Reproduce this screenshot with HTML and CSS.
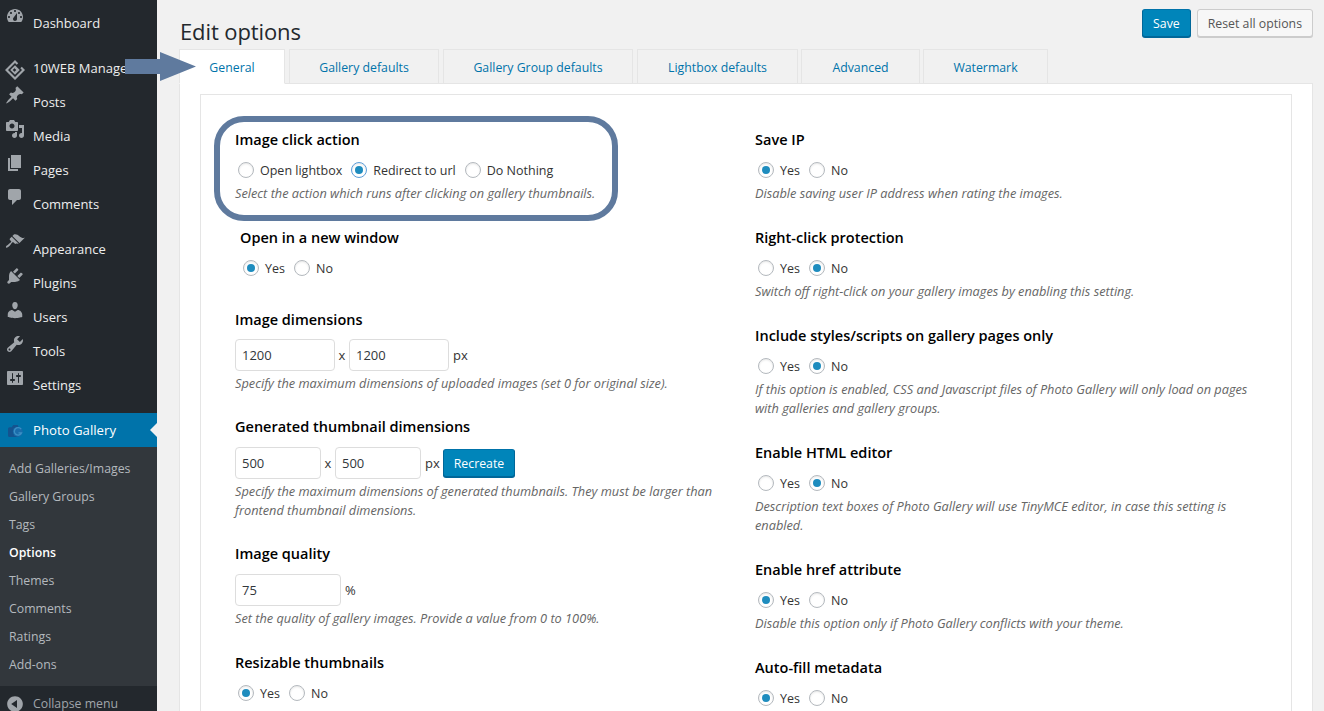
FILE: index.html
```html
<!DOCTYPE html>
<html lang="en">
<head>
<meta charset="utf-8">
<title>Edit options</title>
<link rel="stylesheet" href="styles.css">
</head>
<body>
<div class="shell">
  <nav class="sidebar">
    <ul class="menu">
      <li class="item"><svg class="ico" viewBox="0 0 20 20"><path d="M3.76 16h12.48c1.1-1.37 1.76-3.11 1.76-5 0-4.42-3.58-8-8-8s-8 3.58-8 8c0 1.89.66 3.63 1.76 5zM10 4c.55 0 1 .45 1 1s-.45 1-1 1-1-.45-1-1 .45-1 1-1zM6 6c.55 0 1 .45 1 1s-.45 1-1 1-1-.45-1-1 .45-1 1-1zm8 0c.55 0 1 .45 1 1s-.45 1-1 1-1-.45-1-1 .45-1 1-1zm-5.37 5.55L12 7v6c0 1.1-.9 2-2 2s-2-.9-2-2c0-.57.24-1.08.63-1.45zM4 10c.55 0 1 .45 1 1s-.45 1-1 1-1-.45-1-1 .45-1 1-1zm12 0c.55 0 1 .45 1 1s-.45 1-1 1-1-.45-1-1 .45-1 1-1z"/></svg><span>Dashboard</span></li>
      <li class="item sep"><svg class="ico ico-ten" viewBox="0 0 20 20"><path fill-rule="evenodd" d="M10 0l3.200 3.200-1.500 1.500L10 3 3 10l7 7 7-7-1.700-1.700 1.500-1.500L20 10 10 20 0 10zM10 5.200L14.800 10 10 14.800 5.200 10zM9.500 8.200L7.700 10l1.800 1.800L11.300 10z"/></svg><span class="clip">10WEB Manager</span></li>
      <li class="item"><svg class="ico" viewBox="0 0 20 20"><path d="M10.44 3.02l1.82-1.82 6.36 6.35-1.83 1.82c-1.05-.68-2.48-.57-3.41.36l-.75.75c-.92.93-1.04 2.35-.35 3.41l-1.83 1.82-2.41-2.41-2.8 2.79c-.42.42-3.38 2.71-3.8 2.29s1.86-3.39 2.28-3.81l2.79-2.79L4.1 9.36l1.83-1.82c1.05.69 2.48.57 3.4-.36l.75-.75c.93-.92 1.05-2.35.36-3.41z"/></svg><span>Posts</span></li>
      <li class="item"><svg class="ico" viewBox="0 0 20 20"><path d="M13 11V4c0-.55-.45-1-1-1h-1.670L9 1H5L3.670 3H2c-.55 0-1 .45-1 1v7c0 .55.45 1 1 1h10c.55 0 1-.45 1-1zM7 4.500c1.380 0 2.500 1.120 2.500 2.500S8.380 9.500 7 9.500 4.500 8.380 4.500 7 5.620 4.500 7 4.500zM14 6h5v10.500c0 1.380-1.120 2.500-2.500 2.500S14 17.880 14 16.500s1.120-2.500 2.500-2.500c.17 0 .34.02.5.05V9h-3V6zm-4 8.050V13h2v3.500c0 1.380-1.120 2.500-2.500 2.500S7 17.880 7 16.500 8.120 14 9.500 14c.17 0 .34.02.5.05z"/></svg><span>Media</span></li>
      <li class="item"><svg class="ico" viewBox="0 0 20 20"><path d="M6 15V2h10v13H6zm-1 1h8v2H3V5h2v11z"/></svg><span>Pages</span></li>
      <li class="item"><svg class="ico" viewBox="0 0 20 20"><path d="M5 2h9c1.100 0 2 .9 2 2v7c0 1.100-.9 2-2 2h-2l-5 5v-5H5c-1.100 0-2-.9-2-2V4c0-1.100.9-2 2-2z"/></svg><span>Comments</span></li>
      <li class="item sep"><svg class="ico" viewBox="0 0 20 20"><path d="M14.480 11.060L7.410 3.990l1.500-1.500c.5-.56 2.300-.47 3.510.32 1.210.8 1.430 1.280 2.910 2.100 1.180.64 2.450 1.260 4.450.85zm-.71.71L6.700 4.700 4.930 6.470c-.39.39-.39 1.020 0 1.410l1.060 1.060c.39.39.39 1.030 0 1.420-.6.6-1.430 1.110-2.210 1.690-.35.26-.7.53-1.010.84C1.430 13.230.4 14.750 1.100 15.450c.71.7 2.220-.33 3.560-1.670.31-.31.58-.66.85-1.020.57-.78 1.080-1.610 1.690-2.210.39-.39 1.020-.39 1.410 0l1.060 1.060c.39.39 1.020.39 1.410 0z"/></svg><span>Appearance</span></li>
      <li class="item"><svg class="ico" viewBox="0 0 20 20"><path d="M13.110 4.360L9.870 7.600 8 5.730l3.240-3.240c.35-.34 1.050-.2 1.560.32.52.51.66 1.210.31 1.550zm-8 1.770l.91-1.120 9.010 9.010-1.190.84c-.71.71-2.630 1.160-3.820 1.160H6.140L4.900 17.260c-.59.59-1.540.59-2.120 0-.59-.58-.59-1.530 0-2.120l1.240-1.240v-3.880c0-1.130.4-3.190 1.090-3.890zm7.260 3.970l3.240-3.240c.34-.35 1.040-.21 1.550.31.52.51.66 1.210.31 1.550l-3.240 3.250z"/></svg><span>Plugins</span></li>
      <li class="item"><svg class="ico" viewBox="0 0 20 20"><path d="M10 9.250c-2.270 0-2.730-3.440-2.730-3.440C7 4.020 7.820 2 9.970 2c2.160 0 2.980 2.020 2.710 3.810 0 0-.41 3.440-2.680 3.440zm0 2.570L12.720 10c2.390 0 4.520 2.330 4.520 4.530v2.490s-3.650 1.130-7.240 1.130c-3.650 0-7.240-1.130-7.240-1.130v-2.490c0-2.250 1.940-4.480 4.470-4.480z"/></svg><span>Users</span></li>
      <li class="item"><svg class="ico" viewBox="0 0 20 20"><path d="M16.680 9.770c-1.340 1.340-3.300 1.670-4.950.99l-5.410 6.520c-.99.99-2.590.99-3.580 0s-.99-2.590 0-3.570l6.520-5.420c-.68-1.650-.35-3.610.99-4.950 1.280-1.280 3.120-1.620 4.720-1.060l-2.890 2.890 2.820 2.820 2.860-2.870c.53 1.580.18 3.390-1.080 4.670zM3.810 16.210c.4.39 1.040.39 1.430 0 .4-.4.4-1.040 0-1.430-.39-.4-1.030-.4-1.430 0-.39.39-.39 1.030 0 1.430z"/></svg><span>Tools</span></li>
      <li class="item"><svg class="ico" viewBox="0 0 20 20"><path d="M18 16V4c0-.55-.45-1-1-1H3c-.55 0-1 .45-1 1v12c0 .55.45 1 1 1h14c.55 0 1-.45 1-1zM8 11h1c.55 0 1 .45 1 1s-.45 1-1 1H8v1.500c0 .28-.22.5-.5.5s-.5-.22-.5-.5V13H6c-.55 0-1-.45-1-1s.45-1 1-1h1V5.500c0-.28.22-.5.5-.5s.5.22.5.5V11zm5-2h-1c-.55 0-1-.45-1-1s.45-1 1-1h1V5.500c0-.28.22-.5.5-.5s.5.22.5.5V7h1c.55 0 1 .45 1 1s-.45 1-1 1h-1v5.500c0 .28-.22.5-.5.5s-.5-.22-.5-.5V9z"/></svg><span>Settings</span></li>
      <li class="item sep current"><svg class="ico-pg" viewBox="0 0 20 16"><path d="M5 3l2-3h6l1 3zM2 3h12v13H2a2 2 0 0 1-2-2V5a2 2 0 0 1 2-2z" fill="#14538f"/><circle cx="13" cy="9" r="6.500" fill="#1a6cab"/><path d="M17.500 5.500A5 5 0 1 0 18 10.500H14" fill="none" stroke="#3b8fc4" stroke-width="1.800"/></svg><span>Photo Gallery</span></li>
    </ul>
    <ul class="submenu">
      <li>Add Galleries/Images</li>
      <li>Gallery Groups</li>
      <li>Tags</li>
      <li class="on">Options</li>
      <li>Themes</li>
      <li>Comments</li>
      <li>Ratings</li>
      <li>Add-ons</li>
    </ul>
    <div class="collapse"><svg class="ico-c" viewBox="0 0 20 20"><path d="M10 2.160c4.330 0 7.840 3.510 7.840 7.840s-3.510 7.840-7.840 7.840S2.160 14.330 2.160 10 5.710 2.160 10 2.160zm2 11.720V6.120L6.180 9.970z"/></svg><span>Collapse menu</span></div>
  </nav>
  <main class="content">
    <header class="topbar">
      <h1>Edit options</h1>
      <div class="actions">
        <button class="btn primary">Save</button>
        <button class="btn">Reset all options</button>
      </div>
    </header>
    <div class="tabs">
      <a class="tab active w1">General</a>
      <a class="tab w2">Gallery defaults</a>
      <a class="tab w3">Gallery Group defaults</a>
      <a class="tab w4">Lightbox defaults</a>
      <a class="tab w5">Advanced</a>
      <a class="tab w6">Watermark</a>
    </div>
    <section class="panel">
      <div class="box">
        <div class="col">
          <div class="opt">
            <h3>Image click action</h3>
            <div class="radios"><i class="r"></i><label>Open lightbox</label><i class="r on focus"></i><label>Redirect to url</label><i class="r"></i><label>Do Nothing</label></div>
            <p>Select the action which runs after clicking on gallery thumbnails.</p>
          </div>
          <div class="opt inset nodesc">
            <h3>Open in a new window</h3>
            <div class="radios"><i class="r on"></i><label>Yes</label><i class="r"></i><label>No</label></div>
          </div>
          <div class="opt gap24">
            <h3>Image dimensions</h3>
            <div class="fields"><input class="in w100" value="1200"><span class="x">x</span><input class="in w100" value="1200"><span class="u">px</span></div>
            <p>Specify the maximum dimensions of uploaded images (set 0 for original size).</p>
          </div>
          <div class="opt gap24">
            <h3>Generated thumbnail dimensions</h3>
            <div class="fields low"><input class="in w86" value="500"><span class="x">x</span><input class="in w86" value="500"><span class="u">px</span><button class="btn primary recreate">Recreate</button></div>
            <p>Specify the maximum dimensions of generated thumbnails. They must be larger than<br>frontend thumbnail dimensions.</p>
          </div>
          <div class="opt">
            <h3>Image quality</h3>
            <div class="fields low"><input class="in w106" value="75"><span class="u">%</span></div>
            <p>Set the quality of gallery images. Provide a value from 0 to 100%.</p>
          </div>
          <div class="opt">
            <h3>Resizable thumbnails</h3>
            <div class="radios"><i class="r on"></i><label>Yes</label><i class="r"></i><label>No</label></div>
          </div>
        </div>
        <div class="col">
          <div class="opt">
            <h3>Save IP</h3>
            <div class="radios"><i class="r on"></i><label>Yes</label><i class="r"></i><label>No</label></div>
            <p>Disable saving user IP address when rating the images.</p>
          </div>
          <div class="opt">
            <h3>Right-click protection</h3>
            <div class="radios"><i class="r"></i><label>Yes</label><i class="r on"></i><label>No</label></div>
            <p>Switch off right-click on your gallery images by enabling this setting.</p>
          </div>
          <div class="opt">
            <h3>Include styles/scripts on gallery pages only</h3>
            <div class="radios"><i class="r"></i><label>Yes</label><i class="r on"></i><label>No</label></div>
            <p>If this option is enabled, CSS and Javascript files of Photo Gallery will only load on pages<br>with galleries and gallery groups.</p>
          </div>
          <div class="opt">
            <h3>Enable HTML editor</h3>
            <div class="radios"><i class="r"></i><label>Yes</label><i class="r on"></i><label>No</label></div>
            <p>Description text boxes of Photo Gallery will use TinyMCE editor, in case this setting is<br>enabled.</p>
          </div>
          <div class="opt">
            <h3>Enable href attribute</h3>
            <div class="radios"><i class="r on"></i><label>Yes</label><i class="r"></i><label>No</label></div>
            <p>Disable this option only if Photo Gallery conflicts with your theme.</p>
          </div>
          <div class="opt">
            <h3>Auto-fill metadata</h3>
            <div class="radios"><i class="r on"></i><label>Yes</label><i class="r"></i><label>No</label></div>
          </div>
        </div>
      </div>
    </section>
    <div class="callout"></div>
    <svg class="arrow" viewBox="0 0 71 29"><path d="M0 7h35V0l36 14.500-36 14.500v-7H0z"/></svg>
  </main>
</div>
</body>
</html>
```
FILE: styles.css
```css
* { box-sizing: border-box; }
html, body { margin: 0; height: 711px; overflow: hidden; }
body { background: #f1f1f1; color: #444; font: 13px/18px "Open Sans", "Noto Sans", sans-serif; }
ul { list-style: none; margin: 0; padding: 0; }
.shell { display: flex; height: 711px; overflow: hidden; }

.sidebar { width: 157px; flex: none; background: #23282d; display: flex; flex-direction: column; padding-top: 6px; color: #eee; position: relative; overflow: hidden; }
.item { height: 34px; display: flex; align-items: center; padding-left: 33px; position: relative; white-space: nowrap; }
.item.sep { margin-top: 11px; }
.ico { position: absolute; left: 5px; top: 0; width: 20px; height: 20px; fill: #a0a5aa; }
.ico-ten { top: 9px; }
.current { background: #0073aa; color: #fff; font-size: 13.2px; }
.current::after { content: ""; position: absolute; right: 0; top: 10px; border: 7px solid transparent; border-right-color: #f1f1f1; border-left: 0; }
.ico-pg { position: absolute; left: 8px; top: 12px; width: 15px; height: 12px; }
.submenu { background: #32373c; padding: 7px 0 5px; flex: none; height: 239px; color: #b4b9be; font-size: 12.3px; }
.submenu li { height: 28px; line-height: 30px; padding-left: 9px; }
.submenu .on { color: #fff; font-weight: 600; }
.collapse { height: 34px; padding: 9px 0 0 33px; color: #a0a5aa; position: relative; font-size: 12.3px; }
.ico-c { position: absolute; left: 5px; top: 8px; width: 20px; height: 20px; fill: #a0a5aa; }

.content { flex: 1; position: relative; padding: 0 11px 0 22px; min-width: 0; }
.topbar { height: 49px; display: flex; justify-content: space-between; }
h1 { margin: 0 0 0 1px; padding-top: 16px; font-size: 22px; line-height: 30px; font-weight: 400; color: #23282d; letter-spacing: -.1px; }
.actions { display: flex; gap: 6px; padding-top: 9px; align-items: flex-start; }
.btn { height: 28px; padding: 2px 10px 0; border: 1px solid #ccc; border-radius: 3px; background: #f7f7f7; color: #555; font: 12.3px/24px "Open Sans", "Noto Sans", sans-serif; box-shadow: 0 1px 0 #ccc; }
.btn.primary { background: #0085ba; border-color: #0073aa #006799 #006799; color: #fff; box-shadow: 0 1px 0 #006799; }
.tabs { display: flex; height: 35px; position: relative; z-index: 1; font-size: 12.3px; }
.tab { height: 35px; padding-top: 2px; border: 1px solid #e5e5e5; background: #f1f1f1; display: flex; align-items: center; justify-content: center; color: #0073aa; margin-right: 4px; flex: none; }
.tab.active { background: #fff; border-bottom-color: #fff; }
.w1 { width: 106px; } .w2 { width: 150px; } .w3 { width: 190px; } .w4 { width: 161px; margin-right: 3px; } .w5 { width: 119px; margin-right: 3px; } .w6 { width: 125px; }
.panel { background: #fff; border: 1px solid #e5e5e5; margin-top: -1px; padding: 10px 20px 0; height: 640px; }
.box { border: 1px solid #e5e5e5; display: grid; grid-template-columns: 520px 1fr; padding: 35px 0 0 34px; height: 620px; }

.opt { margin-bottom: 25px; }
.opt h3 { margin: 0; font-size: 14.5px; line-height: 19px; height: 20px; font-weight: 600; color: #000; }
.opt p { margin: 4px 0 0; font-style: italic; color: #666; line-height: 19px; font-size: 12.75px; }
.opt .fields + p { margin-top: 3px; }
.inset { padding-left: 5px; }
.nodesc { margin-bottom: 32px; }
.gap24 { margin-bottom: 24px; }
.radios { display: flex; align-items: center; height: 20px; margin-top: 10px; padding-left: 3px; color: #333; font-size: 12.5px; }
.r { width: 16px; height: 16px; border-radius: 50%; border: 1px solid #b4b9be; background: #fff; flex: none; margin-right: 6px; position: relative; box-shadow: inset 0 1px 2px rgba(0,0,0,.1); }
.r.on::after { content: ""; position: absolute; left: 3px; top: 3px; width: 8px; height: 8px; border-radius: 50%; background: #1e8cbe; }
.r.focus { border-color: #5b9dd9; }
.radios label { margin: 2px 9px 0 0; }
.fields { display: flex; align-items: center; margin-top: 9px; height: 32px; color: #333; }
.fields.low { margin-top: 10px; }
.in { height: 32px; border: 1px solid #ddd; border-radius: 4px; background: #fff; color: #32373c; font: 13px "Open Sans", "Noto Sans", sans-serif; padding: 0 6px; outline: none; }
.w100 { width: 100px; } .w86 { width: 86px; } .w106 { width: 106px; }
.x { width: 14px; text-align: center; }
.u { margin-left: 4px; }
.recreate { margin-left: 3px; height: 28px; padding: 2px 10px 0; }

.callout { position: absolute; left: 57px; top: 116px; width: 404px; height: 105px; border: 6px solid #5f7a9e; border-radius: 30px; pointer-events: none; }
.arrow { position: absolute; left: -32px; top: 52px; width: 71px; height: 29px; fill: #5f7a9e; z-index: 2; }
```
